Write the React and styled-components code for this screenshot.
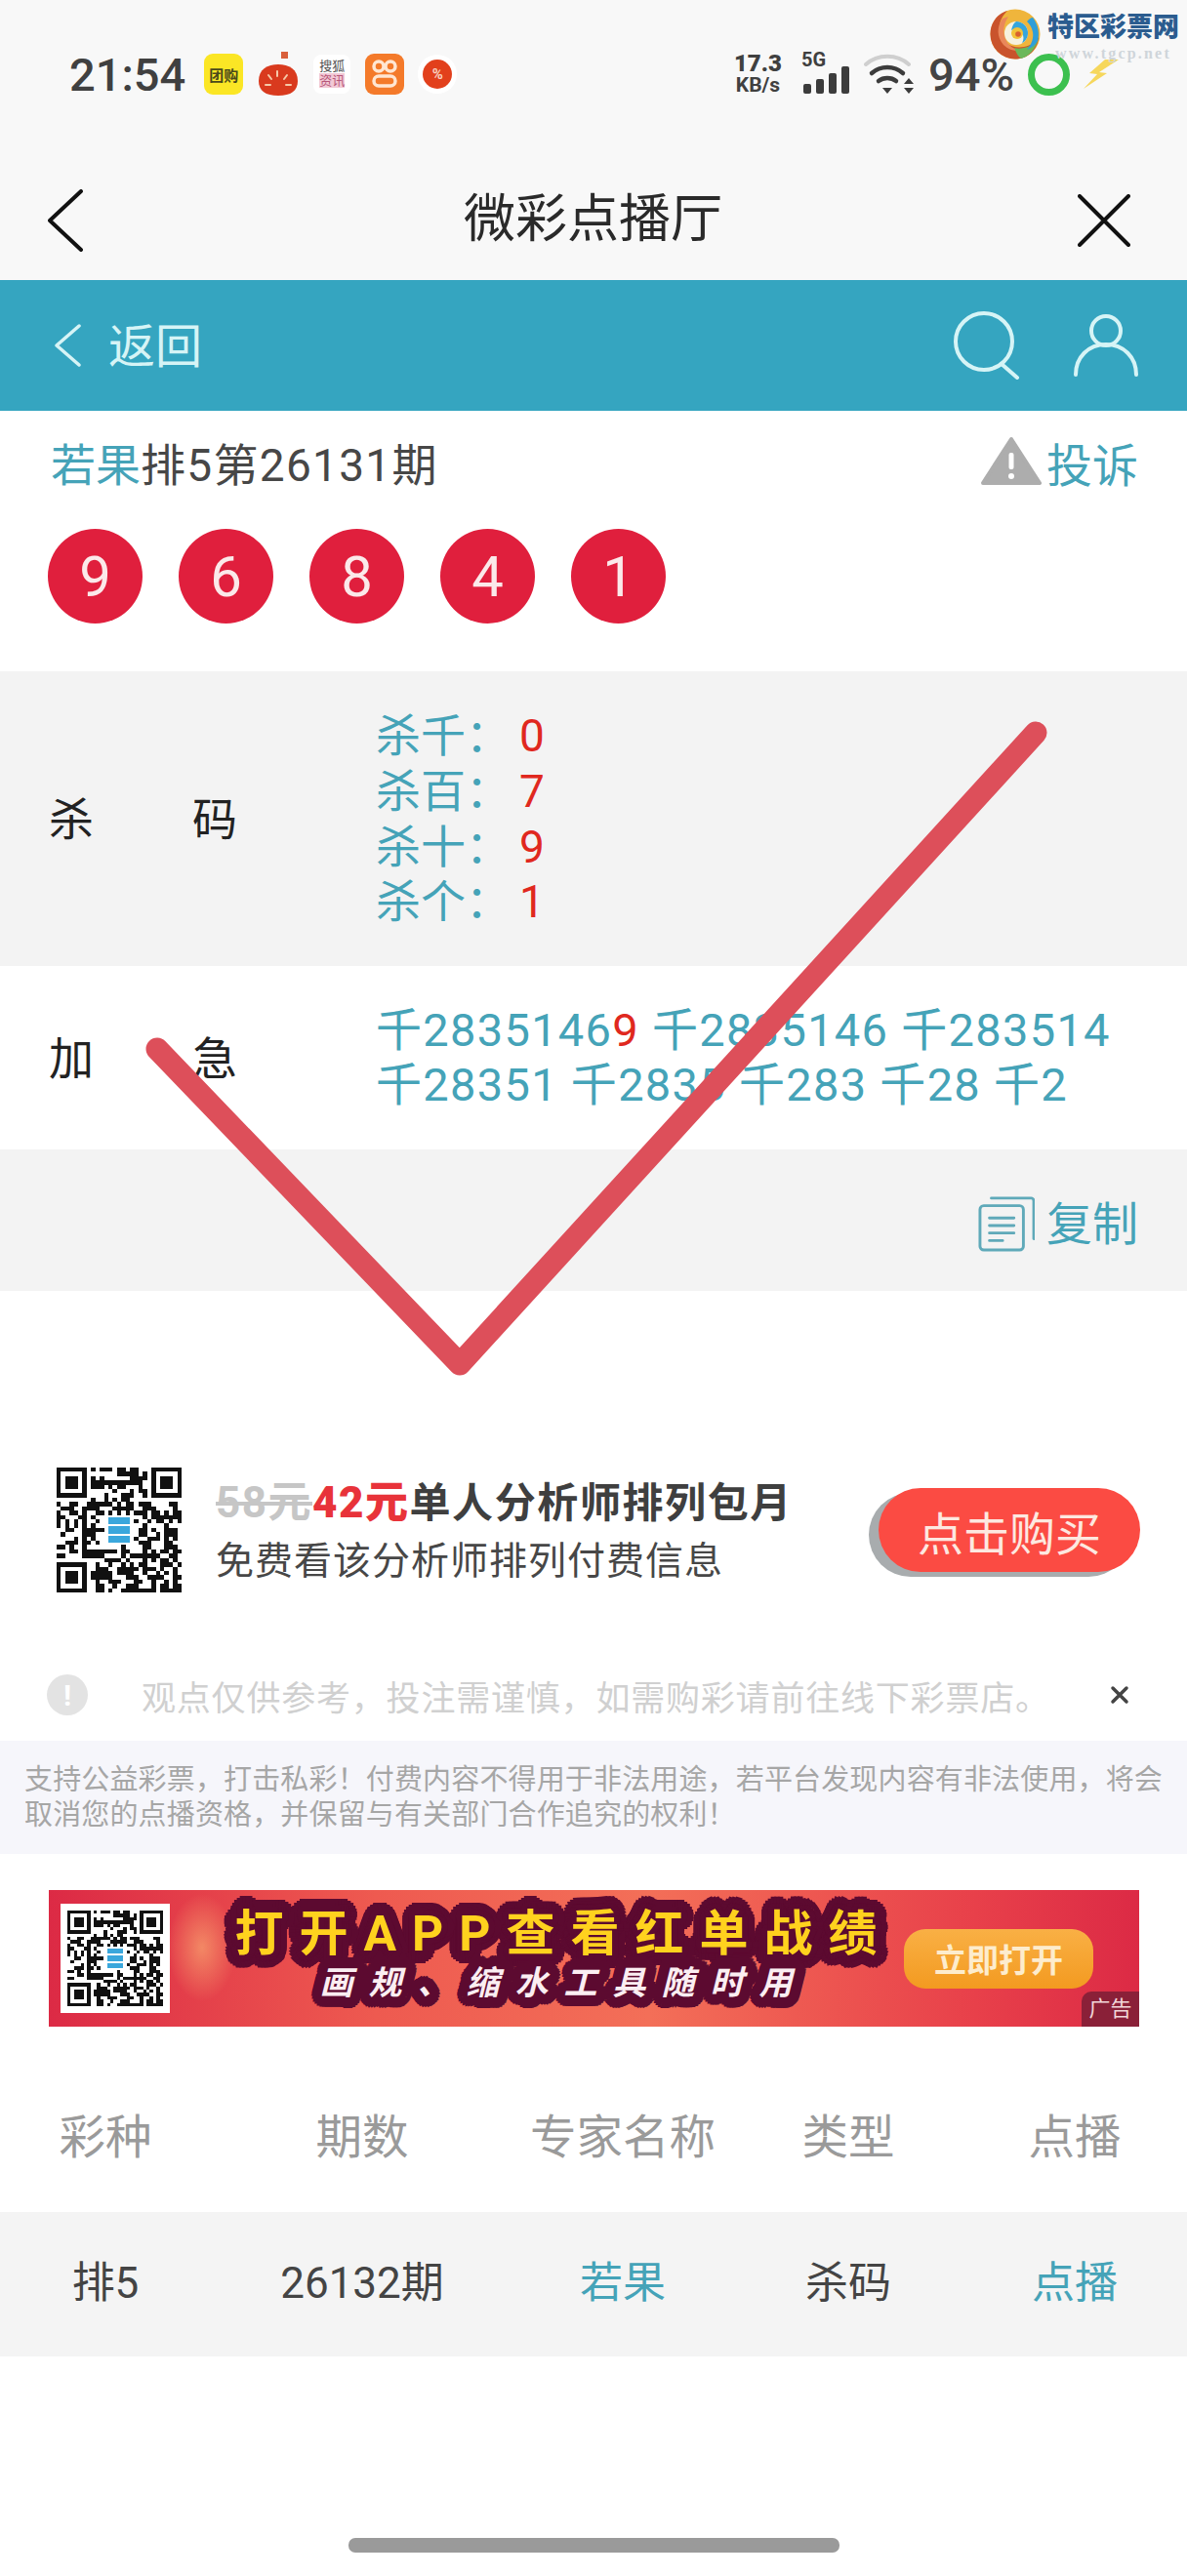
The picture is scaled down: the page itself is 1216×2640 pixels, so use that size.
import styled, { createGlobalStyle } from "styled-components";

const TEAL = "#45a3b8";

const GlobalStyle = createGlobalStyle`
  html, body {
    margin: 0;
    padding: 0;
    background: #fff;
    font-family: Roboto, "Noto Sans CJK SC", sans-serif;
  }
`;

// round outline made of shadows placed on a ring, no miter spikes like a text stroke
const ringShadow = (radius, color) => {
  const parts = [];
  for (let r = radius / 2; r <= radius; r += radius / 2) {
    for (let a = 0; a < 24; a++) {
      const x = (Math.cos((a * Math.PI) / 12) * r).toFixed(1);
      const y = (Math.sin((a * Math.PI) / 12) * r).toFixed(1);
      parts.push(`${x}px ${y}px 0 ${color}`);
    }
  }
  return parts.join(", ");
};

// fake but stable module pattern, with the three finder squares in the corners
function QrCode({ size, logo }) {
  const n = 29;
  const cells = [];
  let seed = 7919;
  const inFinder = (x, y) =>
    (x < 8 && y < 8) || (x >= n - 8 && y < 8) || (x < 8 && y >= n - 8);
  for (let y = 0; y < n; y++) {
    for (let x = 0; x < n; x++) {
      seed = (seed * 1103515245 + 12345) & 0x7fffffff;
      if (!inFinder(x, y) && (seed >> 16) % 100 < 52) {
        cells.push(<rect key={`${x}-${y}`} x={x} y={y} width="1" height="1" />);
      }
    }
  }
  const finder = (x, y) => (
    <g key={`f${x}${y}`}>
      <rect x={x} y={y} width="7" height="7" />
      <rect x={x + 1} y={y + 1} width="5" height="5" fill="#fff" />
      <rect x={x + 2} y={y + 2} width="3" height="3" />
    </g>
  );
  return (
    <svg width={size} height={size} viewBox={`0 0 ${n} ${n}`} shapeRendering="crispEdges" fill="#111">
      {cells}
      {finder(0, 0)}
      {finder(n - 7, 0)}
      {finder(0, n - 7)}
      <rect x="11" y="11" width="7" height="7" fill="#fff" />
      {logo && (
        <g fill="#3aa7dc">
          <rect x="12" y="11.5" width="5" height="1.6" />
          <rect x="12" y="13.7" width="5" height="1.6" />
          <rect x="12" y="15.9" width="5" height="1.6" />
        </g>
      )}
    </svg>
  );
}

// the swirl is stacked discs and crescents, outermost first
function SiteLogo() {
  return (
    <svg width="52" height="52" viewBox="0 0 52 52">
      <circle cx="26" cy="26" r="25.5" fill="#efb53c" />
      <path d="M26 51.5A25.5 25.5 0 0 1 .5 26C.5 14 8 5 18 2c-7 7-10 15-7 24 3 10 13 15 24 13 6-1 11-4 15-10-1 13-11 22.500-24 22.500z" fill="#c9532c" />
      <path d="M13 10C7 18 7 29 14 37c5 5 12 7 19 6-8-1-14-5-17-12-3-8-2-15 3-23z" fill="#e9875a" />
      <path d="M32 51c8-2 15-10 18-21-4 6-9 9-15 10-4 1-7 1-10 0 2 5 4 9 7 11z" fill="#6bb85a" />
      <path d="M44 9c6 8 7 17 5 24-2 4-6 7-11 9 5-6 7-12 6-18-1-5-3-8-6-11 2-2 4-4 6-4z" fill="#2f9ed8" />
      <circle cx="27" cy="25" r="12" fill="#f6f1df" />
      <path d="M27 13a12 12 0 0 1 12 12c0 4-2 8-6 10 2-3 2-7 0-10-2-4-7-5-11-3 1-5 3-8 5-9z" fill="#35a5dc" />
      <circle cx="28" cy="25" r="6" fill="#f2c23a" />
      <circle cx="29" cy="26" r="2.800" fill="#d9602f" />
    </svg>
  );
}

export default function App() {
  return (
    <Page>
      <GlobalStyle />
      <TopArea>
        <StatusBar>
          <StatusLeft>
            <Clock>21:54</Clock>
            <NoticeIcons>
              <MeituanTile>团购</MeituanTile>
              <svg width="42" height="46" viewBox="0 0 42 46">
                <rect x="24" y="0" width="7" height="7" fill="#d9603c" />
                <path d="M1 30C1 18 10 13 21 13s20 5 20 17c0 10-7 15-20 15S1 40 1 30z" fill="#d93a1e" />
                <path d="M20 20v5M11 24l3 4M30 24l-3 4M8 34h5M29 34h5" stroke="#f6c9a8" strokeWidth="2" strokeLinecap="round" />
              </svg>
              <SohuTile>
                <span>搜狐</span>
                <em>资讯</em>
              </SohuTile>
              <OrangeTile>
                <svg width="30" height="34" viewBox="0 0 30 34" fill="none" stroke="#ffe6d2" strokeWidth="3.5">
                  <circle cx="9" cy="9" r="5" />
                  <circle cx="21" cy="9" r="5" />
                  <rect x="4" y="19" width="22" height="10" rx="5" />
                </svg>
              </OrangeTile>
              <PercentDot>%</PercentDot>
            </NoticeIcons>
          </StatusLeft>
          <StatusRight>
            <Speed>
              <b>17.3</b>
              <span>KB/s</span>
            </Speed>
            <Signal>
              <SignalTag>5G</SignalTag>
              <svg width="48" height="30" viewBox="0 0 48 30" fill="#3c3c3c">
                <rect x="0" y="19" width="8" height="10" rx="2" />
                <rect x="13" y="14" width="8" height="15" rx="2" />
                <rect x="26" y="8" width="8" height="21" rx="2" />
                <rect x="39" y="1" width="8" height="28" rx="2" />
              </svg>
            </Signal>
            <svg width="52" height="42" viewBox="0 0 52 42" fill="none" strokeLinecap="round">
              <path d="M2 11C14 0 34 0 46 11" stroke="#cfcfcf" strokeWidth="4" />
              <path d="M8 20c9-8 23-8 32 0" stroke="#3c3c3c" strokeWidth="4.5" />
              <path d="M15 28c5-4 13-4 18 0" stroke="#3c3c3c" strokeWidth="4.5" />
              <path d="M19 35h10l-5 6z" fill="#3c3c3c" />
              <path d="M46 25l5 6H41zM46 41l5-6H41z" fill="#3c3c3c" />
            </svg>
            <Battery>94%</Battery>
            <ChargeRing />
            <svg width="36" height="30" viewBox="0 0 36 30">
              <path d="M22 0L6 14l8 1L0 30 24 14l-8-1L36 0z" fill="#f6d75c" />
            </svg>
          </StatusRight>
        </StatusBar>
        <NavBar>
          <svg width="36" height="64" viewBox="0 0 36 64" fill="none" stroke="#111" strokeWidth="4" strokeLinecap="round" strokeLinejoin="round">
            <path d="M34 2L2 32l32 30" />
          </svg>
          <NavTitle>微彩点播厅</NavTitle>
          <CloseIcon viewBox="0 0 54 54" fill="none" stroke="#111" strokeWidth="4" strokeLinecap="round">
            <path d="M2 2l50 50M52 2L2 52" />
          </CloseIcon>
        </NavBar>
      </TopArea>

      <SubBar>
        <BackLink>
          <svg width="28" height="46" viewBox="0 0 28 46" fill="none" stroke="#d6f4f6" strokeWidth="3.5" strokeLinecap="round" strokeLinejoin="round">
            <path d="M26 3L3 23l23 20" />
          </svg>
          <BackLabel>返回</BackLabel>
        </BackLink>
        <SubIcons>
          <svg width="68" height="70" viewBox="0 0 68 70" fill="none" stroke="#d6f4f6" strokeWidth="4" strokeLinecap="round">
            <circle cx="31" cy="31" r="29" />
            <path d="M49 54l16 14" />
          </svg>
          <svg width="66" height="64" viewBox="0 0 66 64" fill="none" stroke="#d6f4f6" strokeWidth="4" strokeLinecap="round">
            <circle cx="33" cy="17" r="15" />
            <path d="M2 62c0-18 13-31 31-31s31 13 31 31" />
          </svg>
        </SubIcons>
      </SubBar>

      <ResultHead>
        <IssueLine>
          <Author>若果</Author>排5第26131期
        </IssueLine>
        <Complain>
          <svg width="62" height="52" viewBox="0 0 62 52">
            <path d="M31 3L60 48H2z" fill="#adadad" stroke="#adadad" strokeWidth="4" strokeLinejoin="round" />
            <rect x="28.5" y="17" width="5" height="17" rx="2" fill="#fff" />
            <circle cx="31" cy="41" r="3" fill="#fff" />
          </svg>
          <span>投诉</span>
        </Complain>
      </ResultHead>
      <Balls>
        {[9, 6, 8, 4, 1].map((num, i) => (
          <Ball key={i}>{num}</Ball>
        ))}
      </Balls>

      <InfoRow $height={302} $shaded>
        <RowLabel>
          <span>杀</span>
          <span>码</span>
        </RowLabel>
        <KillList>
          {[
            ["杀千：", 0],
            ["杀百：", 7],
            ["杀十：", 9],
            ["杀个：", 1],
          ].map(([label, num]) => (
            <KillLine key={label}>
              {label}
              <Hit>{num}</Hit>
            </KillLine>
          ))}
        </KillList>
      </InfoRow>

      <InfoRow $height={188}>
        <RowLabel>
          <span>加</span>
          <span>急</span>
        </RowLabel>
        <UrgentText>
          <div>
            千2835146<Red>9</Red> 千2835146 千283514
          </div>
          <div>千28351 千2835 千283 千28 千2</div>
        </UrgentText>
      </InfoRow>

      <CopyRow>
        <CopyIcon viewBox="0 0 60 60" fill="none" stroke="#5fa9b9" strokeWidth="3" strokeLinecap="round">
          <path d="M14 3h42a3 3 0 0 1 3 3v40" />
          <rect x="2" y="11" width="46" height="47" rx="4" />
          <path d="M12 24h26M12 32h26M12 40h26M12 48h14" />
        </CopyIcon>
        <span>复制</span>
      </CopyRow>

      <PromoRow>
        <QrCode size={128} logo />
        <PromoText>
          <PromoTitle>
            <s>58元</s>
            <strong>42元</strong>单人分析师排列包月
          </PromoTitle>
          <PromoSub>免费看该分析师排列付费信息</PromoSub>
        </PromoText>
        <BuyButton>点击购买</BuyButton>
      </PromoRow>

      <NoticeRow>
        <NoticeDot>!</NoticeDot>
        <NoticeText>观点仅供参考，投注需谨慎，如需购彩请前往线下彩票店。</NoticeText>
        <NoticeClose viewBox="0 0 20 20" fill="none" stroke="#444" strokeWidth="3.5" strokeLinecap="round">
          <path d="M3 3l14 14M17 3L3 17" />
        </NoticeClose>
      </NoticeRow>

      <Disclaimer>
        支持公益彩票，打击私彩！付费内容不得用于非法用途，若平台发现内容有非法使用，将会取消您的点播资格，并保留与有关部门合作追究的权利！
      </Disclaimer>

      <Banner>
        <BannerQr>
          <QrCode size={98} logo />
        </BannerQr>
        <BannerCopy>
          <Headline>打开APP查看红单战绩</Headline>
          <Slogan>画规、缩水工具随时用</Slogan>
        </BannerCopy>
        <OpenButton>立即打开</OpenButton>
        <AdTag>广告</AdTag>
      </Banner>

      <TableHead>
        <span>彩种</span>
        <span>期数</span>
        <span>专家名称</span>
        <span>类型</span>
        <span>点播</span>
      </TableHead>
      <TableRow>
        <span>排5</span>
        <span>26132期</span>
        <TealCell>若果</TealCell>
        <span>杀码</span>
        <TealCell>点播</TealCell>
      </TableRow>

      <HomeBar />

      <Watermark>
        <SiteLogo />
        <WatermarkText>
          <b>特区彩票网</b>
          <span>www.tgcp.net</span>
        </WatermarkText>
      </Watermark>

      {/* hand-drawn tick lying over the whole article */}
      <Tick viewBox="0 0 1216 2640" fill="none">
        <path d="M161 1075L471 1398L1061 751" stroke="#dd4f5a" strokeWidth="23" strokeLinecap="round" strokeLinejoin="round" />
      </Tick>
    </Page>
  );
}

const Page = styled.div`
  position: relative;
  display: flex;
  flex-direction: column;
  width: 1216px;
  height: 2640px;
  overflow: hidden;
  background: #fff;
  color: #444;
`;

const TopArea = styled.div`
  height: 287px;
  background: #f8f8f8;
`;

const StatusBar = styled.div`
  display: flex;
  justify-content: space-between;
  align-items: center;
  height: 165px;
  padding: 0 70px 13px 71px;
  box-sizing: border-box;
`;

const StatusLeft = styled.div`
  display: flex;
  align-items: center;
  gap: 19px;
`;

const Clock = styled.span`
  font-size: 47px;
  font-weight: 500;
  color: #404040;
`;

const NoticeIcons = styled.div`
  display: flex;
  align-items: center;
  gap: 15px;
`;

const MeituanTile = styled.div`
  display: flex;
  align-items: center;
  justify-content: center;
  width: 40px;
  height: 42px;
  border-radius: 9px;
  background: #fbe625;
  color: #4a4a1a;
  font-size: 15px;
  font-weight: 700;
  white-space: nowrap;
`;

const SohuTile = styled.div`
  display: flex;
  flex-direction: column;
  align-items: center;
  width: 38px;
  height: 40px;
  border-radius: 8px;
  background: #fff;
  font-size: 13px;
  line-height: 15px;
  color: #555;
  padding-top: 4px;
  box-sizing: border-box;
  em {
    font-style: normal;
    color: #b8587a;
    background: #f2c9d6;
  }
`;

const OrangeTile = styled.div`
  display: flex;
  align-items: center;
  justify-content: center;
  width: 40px;
  height: 42px;
  border-radius: 9px;
  background: #f47a2a;
`;

const PercentDot = styled.div`
  display: flex;
  align-items: center;
  justify-content: center;
  width: 30px;
  height: 30px;
  margin: 0 4px;
  border-radius: 50%;
  background: #e2401c;
  box-shadow: 0 0 0 5px #fff;
  color: #f8d0c0;
  font-size: 15px;
  font-weight: 700;
`;

const StatusRight = styled.div`
  display: flex;
  align-items: center;
  gap: 14px;
`;

const Speed = styled.div`
  display: flex;
  flex-direction: column;
  align-items: center;
  margin-right: 8px;
  color: #404040;
  font-weight: 700;
  b {
    font-size: 24px;
    line-height: 22px;
  }
  span {
    font-size: 21px;
    line-height: 22px;
  }
`;

const Signal = styled.div`
  position: relative;
  display: flex;
  padding-top: 12px;
`;

const SignalTag = styled.span`
  position: absolute;
  top: -6px;
  left: -2px;
  font-size: 20px;
  font-weight: 700;
  color: #404040;
`;

const Battery = styled.span`
  font-size: 47px;
  font-weight: 500;
  color: #444;
`;

const ChargeRing = styled.div`
  width: 43px;
  height: 43px;
  box-sizing: border-box;
  border: 7px solid #3cc04f;
  border-radius: 50%;
`;

const NavBar = styled.div`
  display: grid;
  grid-template-columns: 1fr auto 1fr;
  align-items: center;
  height: 122px;
  padding: 0 58px 0 49px;
`;

const NavTitle = styled.div`
  margin: -13px 0 0 8px;
  font-size: 53px;
  color: #2a2a2a;
`;

const CloseIcon = styled.svg`
  justify-self: end;
  width: 54px;
  height: 54px;
`;

const SubBar = styled.div`
  display: flex;
  justify-content: space-between;
  align-items: center;
  height: 134px;
  padding: 0 50px 0 55px;
  background: #35a5c0;
`;

const BackLink = styled.div`
  display: flex;
  align-items: center;
  gap: 28px;
  font-size: 48px;
  color: #d6f4f6;
`;

const BackLabel = styled.span`
  margin-top: -6px;
`;

const SubIcons = styled.div`
  display: flex;
  align-items: center;
  gap: 55px;
`;

const ResultHead = styled.div`
  display: flex;
  justify-content: space-between;
  align-items: center;
  height: 60px;
  margin-top: 22px;
  padding: 0 50px 0 52px;
`;

const IssueLine = styled.div`
  font-size: 46px;
  letter-spacing: 1.3px;
  color: #474747;
`;

const Author = styled.span`
  color: ${TEAL};
  letter-spacing: 0;
`;

const Complain = styled.div`
  display: flex;
  align-items: center;
  gap: 5px;
  font-size: 47px;
  color: ${TEAL};
`;

const Balls = styled.div`
  display: flex;
  gap: 37px;
  margin-top: 39px;
  padding: 0 49px 49px;
`;

const Ball = styled.div`
  display: flex;
  align-items: center;
  justify-content: center;
  width: 97px;
  height: 97px;
  border-radius: 50%;
  background: #e01f3d;
  color: #fbe9ea;
  font-size: 58px;
`;

const InfoRow = styled.div`
  display: flex;
  align-items: center;
  height: ${(p) => p.$height}px;
  padding-left: 50px;
  background: ${(p) => (p.$shaded ? "#f3f3f3" : "#fff")};
`;

const RowLabel = styled.div`
  display: flex;
  justify-content: space-between;
  width: 193px;
  margin: -6px 142px 0 0;
  font-size: 46px;
  color: #222;
`;

const KillList = styled.div`
  margin-top: 1px;
  font-size: 46px;
  line-height: 56.6px;
  color: ${TEAL};
`;

const KillLine = styled.div`
  white-space: nowrap;
`;

const Hit = styled.span`
  margin-left: 9px;
  color: #e0281e;
`;

const UrgentText = styled.div`
  font-size: 47px;
  line-height: 56px;
  letter-spacing: 1.3px;
  color: ${TEAL};
  white-space: pre;
`;

const Red = styled.span`
  color: #e0281e;
`;

const CopyRow = styled.div`
  display: flex;
  justify-content: flex-end;
  align-items: center;
  gap: 12px;
  height: 145px;
  padding-right: 50px;
  background: #f3f3f3;
  font-size: 47px;
  color: ${TEAL};
`;

const CopyIcon = styled.svg`
  width: 58px;
  height: 58px;
  margin-top: 6px;
`;

const PromoRow = styled.div`
  display: flex;
  align-items: center;
  margin-top: 181px;
  padding: 0 48px 0 58px;
`;

const PromoText = styled.div`
  margin-left: 35px;
`;

const PromoTitle = styled.div`
  font-size: 42px;
  line-height: 56px;
  font-weight: 700;
  letter-spacing: 1.6px;
  color: #3f3f3f;
  white-space: nowrap;
  s {
    font-size: 44px;
    color: #c6c6c6;
    letter-spacing: 1.5px;
  }
  strong {
    font-size: 44px;
    color: #e8333a;
    letter-spacing: 1.5px;
  }
`;

const PromoSub = styled.div`
  margin-top: 6px;
  font-size: 39px;
  line-height: 50px;
  letter-spacing: 1px;
  color: #474747;
  white-space: nowrap;
`;

const BuyButton = styled.div`
  display: flex;
  align-items: center;
  justify-content: center;
  width: 268px;
  height: 86px;
  margin-left: auto;
  border-radius: 43px;
  background: #fb4b43;
  box-shadow: -10px 5px 0 #a8acae;
  color: #fde8e0;
  font-size: 47px;
`;

const NoticeRow = styled.div`
  display: flex;
  align-items: center;
  height: 56px;
  margin: 77px 0 19px;
  padding: 0 59px 0 48px;
`;

const NoticeDot = styled.div`
  display: flex;
  align-items: center;
  justify-content: center;
  width: 42px;
  height: 42px;
  border-radius: 50%;
  background: #e3e3e3;
  color: #fff;
  font-size: 30px;
  font-weight: 700;
`;

const NoticeText = styled.div`
  margin-left: 55px;
  font-size: 35px;
  letter-spacing: 0.8px;
  color: #d0d0d0;
  white-space: nowrap;
`;

const NoticeClose = styled.svg`
  width: 20px;
  height: 20px;
  margin-left: auto;
`;

const Disclaimer = styled.div`
  box-sizing: border-box;
  height: 116px;
  padding: 22px 25px 0;
  background: #f6f6fb;
  font-size: 29px;
  line-height: 36px;
  letter-spacing: 0.15px;
  color: #a6a6a6;
`;

const Banner = styled.div`
  position: relative;
  display: flex;
  align-items: center;
  height: 140px;
  margin: 37px 49px 0 50px;
  padding-left: 12px;
  background: linear-gradient(90deg, #dc2a45 0%, #ee5a50 30%, #f36f58 55%, #e8404a 85%, #dc2a45 100%);
  /* pale petal behind the headline */
  &::before {
    content: "";
    position: absolute;
    left: 122px;
    top: 4px;
    width: 70px;
    height: 110px;
    background: radial-gradient(closest-side, rgba(248, 160, 110, 0.75), rgba(248, 160, 110, 0));
  }
`;

const BannerQr = styled.div`
  position: relative;
  display: flex;
  padding: 7px;
  background: #fff;
`;

const BannerCopy = styled.div`
  position: relative;
  display: flex;
  flex-direction: column;
  align-items: center;
  margin-left: 55px;
  width: 697px;
`;

const Headline = styled.div`
  margin-top: -6px;
  color: #ffd21e;
  font-size: 50px;
  line-height: 54px;
  font-weight: 700;
  letter-spacing: 16px;
  white-space: nowrap;
  text-shadow: ${ringShadow(13, "#5c0a30")};
`;

const Slogan = styled.div`
  margin-top: 2px;
  color: #fbeef2;
  font-size: 34px;
  line-height: 42px;
  font-style: italic;
  font-weight: 700;
  letter-spacing: 16px;
  white-space: nowrap;
  text-shadow: ${ringShadow(11, "#5c0a30")};
`;

const OpenButton = styled.div`
  position: relative;
  display: flex;
  align-items: center;
  justify-content: center;
  width: 194px;
  height: 61px;
  border-radius: 22px;
  background: linear-gradient(180deg, #f9b045, #f39a20);
  color: #fdeccd;
  font-size: 33px;
  font-weight: 700;
`;

const AdTag = styled.div`
  position: absolute;
  right: 0;
  bottom: 0;
  width: 59px;
  height: 36px;
  border-radius: 10px 0 0 0;
  background: #8a2038;
  color: #f2d6d8;
  font-size: 22px;
  line-height: 36px;
  text-align: center;
`;

const tableColumns = "216px 310px 224px 238px 226px";

const TableHead = styled.div`
  display: grid;
  grid-template-columns: ${tableColumns};
  align-items: center;
  box-sizing: border-box;
  height: 155px;
  margin-top: 35px;
  padding-bottom: 6px;
  font-size: 47.5px;
  color: #9a9a9a;
  text-align: center;
`;

const TableRow = styled.div`
  display: grid;
  grid-template-columns: ${tableColumns};
  align-items: center;
  box-sizing: border-box;
  height: 148px;
  padding-bottom: 10px;
  background: #f4f4f4;
  font-size: 44px;
  color: #444;
  text-align: center;
`;

const TealCell = styled.span`
  color: ${TEAL};
`;

const HomeBar = styled.div`
  align-self: center;
  width: 503px;
  height: 15px;
  margin: auto 0 24px;
  border-radius: 7px;
  background: #9a9a9a;
`;

const Watermark = styled.div`
  position: absolute;
  top: 9px;
  left: 1014px;
  width: 200px;
  display: flex;
  gap: 7px;
  svg {
    flex: none;
  }
`;

const WatermarkText = styled.div`
  display: flex;
  flex-direction: column;
  align-items: center;
  flex: none;
  white-space: nowrap;
  b {
    font-size: 27px;
    line-height: 38px;
    font-weight: 900;
    color: #2b5c8f;
  }
  span {
    font-family: "Liberation Serif", serif;
    font-size: 16px;
    line-height: 16px;
    letter-spacing: 2.2px;
    font-weight: 700;
    color: #cfd5da;
  }
`;

const Tick = styled.svg`
  position: absolute;
  inset: 0;
  width: 1216px;
  height: 2640px;
  pointer-events: none;
`;
